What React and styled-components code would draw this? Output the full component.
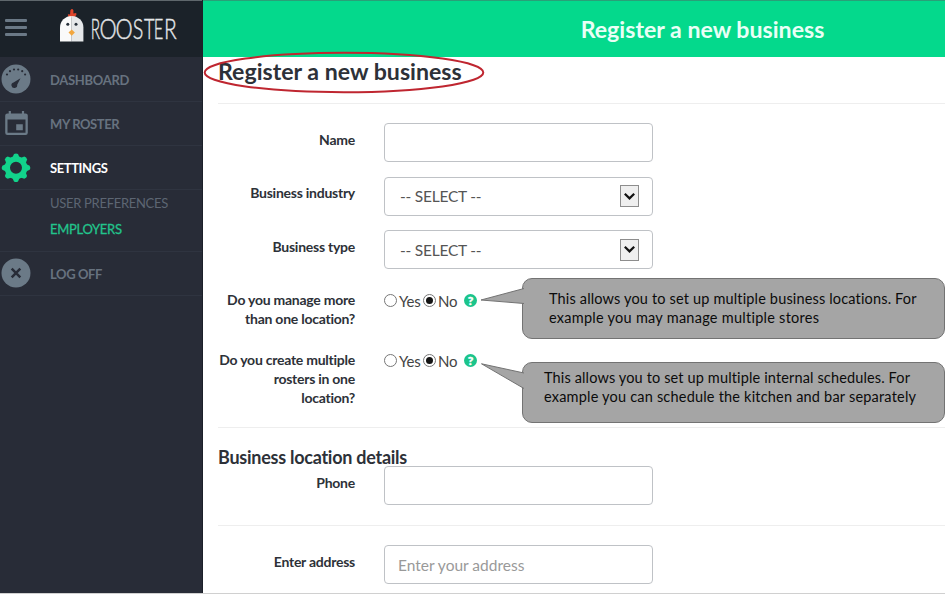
import React from "react";
import styled, { createGlobalStyle, css } from "styled-components";

const GlobalStyle = createGlobalStyle`
  * { box-sizing: border-box; }
  body { margin: 0; overflow: hidden; background: #fff; }
  h1, h2, h3, p { margin: 0; }
`;

const Page = styled.div`
  position: relative;
  display: flex;
  width: 945px;
  height: 594px;
  overflow: hidden;
  font-family: Lato, "Liberation Sans", sans-serif;
  color: #2d3138;
  border-bottom: 1px solid #d0d0d0;
`;

const Sidebar = styled.aside`
  display: flex;
  flex-direction: column;
  width: 203px;
  flex: none;
  background: #282c37;
  border-right: 1px solid #1c2029;
`;

const Brand = styled.div`
  display: flex;
  align-items: flex-start;
  height: 57px;
  flex: none;
  background: #1b2229;
  border-top: 1px solid #5f676c;
`;

const MenuButton = styled.button`
  display: flex;
  flex-direction: column;
  gap: 4px;
  width: 22px;
  margin: 18px 0 0 5px;
  padding: 0;
  border: 0;
  background: none;
`;

const MenuBar = styled.span`
  height: 3px;
  border-radius: 1px;
  background: #6b7986;
`;

const Logo = styled.svg`
  display: block;
  width: 130px;
  height: 48px;
  margin: 2px 0 0 28px;
  overflow: visible;
`;

const Nav = styled.nav`
  display: flex;
  flex-direction: column;
  padding-top: 1px;
`;

const NavItem = styled.div`
  display: flex;
  align-items: center;
  gap: 19px;
  height: 44px;
  flex: none;
  padding: 0 0 1px 1px;
  border-bottom: 1px solid #2f3440;
  font-size: 13px;
  font-weight: 700;
  letter-spacing: ${(p) => p.$spacing || "-0.4px"};
  color: ${(p) => (p.$active ? "#ffffff" : "#67727f")};
  svg { display: block; width: 30px; height: 30px; flex: none; }
`;

const NavText = styled.span`
  padding-top: 2px;
  line-height: 18px;
  white-space: nowrap;
`;

const SubNav = styled.div`
  height: 62px;
  flex: none;
  padding: 0 0 0 50px;
  border-bottom: 1px solid #2f3440;
`;

const SubItem = styled.div`
  height: 26px;
  line-height: 26px;
  font-size: 13px;
  white-space: nowrap;
  letter-spacing: -0.3px;
  color: ${(p) => (p.$active ? "#22c48c" : "#5d6673")};
  -webkit-text-stroke: ${(p) => (p.$active ? "0.3px #22c48c" : "0")};
`;

const Main = styled.main`
  flex: 1;
  min-width: 0;
  display: flex;
  flex-direction: column;
`;

const Header = styled.header`
  height: 57px;
  flex: none;
  padding-left: 257px;
  border-top: 1px solid #29a078;
  background: #04d98c;
  color: #e9fff6;
  font-size: 23.15px;
  font-weight: 700;
  line-height: 57px;
  text-align: center;
`;

const Content = styled.div`
  display: flex;
  flex-direction: column;
  padding-left: 15px;
`;

const Title = styled.h1`
  height: 47px;
  border-bottom: 1px solid #eeeeee;
  font-size: 23.15px;
  font-weight: 700;
  line-height: 29px;
`;

const Section = styled.section`
  height: ${(p) => p.$height}px;
  padding-top: ${(p) => p.$top}px;
  border-bottom: 1px solid ${(p) => (p.$last ? "transparent" : "#eeeeee")};
`;

const SectionTitle = styled.h2`
  height: 19px;
  font-size: 18px;
  font-weight: 700;
  line-height: 20px;
  letter-spacing: -0.26px;
`;

const Row = styled.div`
  display: grid;
  grid-template-columns: 137px 269px;
  column-gap: 29px;
  align-items: start;
  min-height: ${(p) => p.$height}px;
`;

const Label = styled.label`
  padding-top: ${(p) => p.$top ?? 7}px;
  font-size: 14px;
  font-weight: 700;
  line-height: 19px;
  letter-spacing: -0.25px;
  text-align: right;
  white-space: pre;
`;

const fieldFrame = css`
  width: 269px;
  height: 39px;
  border: 1.5px solid #bfc2c6;
  border-radius: 4px;
  background: #fff;
  font-family: inherit;
  font-size: 15.5px;
`;

const Input = styled.input`
  ${fieldFrame}
  padding: 0 13px;
  &::placeholder { color: #999; opacity: 1; }
`;

const Select = styled.div`
  ${fieldFrame}
  display: flex;
  align-items: center;
  justify-content: space-between;
  padding: 0 13px 0 15px;
  letter-spacing: -0.22px;
  color: #555;
`;

const SelectArrow = styled.span`
  display: flex;
  align-items: center;
  justify-content: center;
  width: 19px;
  height: 22px;
  border: 1px solid #8d8d8d;
  background: #efefef;
`;

const Radios = styled.div`
  display: flex;
  align-items: center;
  height: 21px;
  color: #444;
  font-size: 15px;
  letter-spacing: -0.2px;
`;

const Radio = styled.span`
  display: flex;
  align-items: center;
  justify-content: center;
  width: 13px;
  height: 13px;
  flex: none;
  border: 1px solid #777;
  border-radius: 50%;
  background: #fff;
  &::after {
    content: "";
    width: 7px;
    height: 7px;
    border-radius: 50%;
    background: ${(p) => (p.$checked ? "#151515" : "transparent")};
  }
`;

const RadioText = styled.span`
  width: ${(p) => p.$width}px;
  padding: 0 0 0 2px;
  line-height: 18px;
`;

const Help = styled.span`
  display: flex;
  align-items: center;
  justify-content: center;
  width: 13px;
  height: 13px;
  border-radius: 50%;
  background: #1bc48c;
  color: #fff;
  font-size: 12px;
  font-weight: 900;
  line-height: 13px;
  -webkit-text-stroke: 0.4px #fff;
`;

/* Annotations lie over the form */
const Ellipse = styled.svg`
  position: absolute;
  left: 202px;
  top: 50px;
`;

const Callout = styled.div`
  position: absolute;
  left: 522px;
  top: ${(p) => p.$top}px;
  width: 423px;
  height: 61px;
  padding: ${(p) => p.$padding};
  border: 1px solid #737373;
  border-radius: 10px;
  background: #a5a5a5;
  color: #0b0b0b;
  font-size: 14.5px;
  line-height: 19px;
  white-space: nowrap;
`;

const CalloutLine = styled.p`
  letter-spacing: ${(p) => p.$spacing};
`;

const Tail = styled.svg`
  position: absolute;
  left: -43px;
  top: 0;
  width: 44px;
  height: 40px;
`;

const Gauge = () => (
  <svg viewBox="0 0 30 30">
    <circle cx="15" cy="15" r="14.5" fill="#6b7a87" />
    <g fill="#282c37">
      <circle cx="6" cy="10.5" r="1.1" />
      <circle cx="9" cy="7.2" r="1.1" />
      <circle cx="13" cy="5.5" r="1.1" />
      <circle cx="17.2" cy="5.5" r="1.1" />
      <circle cx="21.2" cy="7.2" r="1.1" />
      <circle cx="24.1" cy="10.5" r="1.1" />
      <path d="M19.5 14.2 L16.2 20.8 A2.9 2.9 0 1 1 12.5 18.4 Z" />
    </g>
  </svg>
);

const CalendarIcon = () => (
  <svg viewBox="0 0 30 30">
    <path
      fill="#6b7a87"
      fillRule="evenodd"
      d="M7.7 3h2.2v2.4h11V3h2.2v2.4H24.6a2.2 2.2 0 0 1 2.2 2.2v17.2A2.2 2.2 0 0 1 24.6 27H6.4A2.2 2.2 0 0 1 4.2 24.8V7.6A2.2 2.2 0 0 1 6.4 5.4h1.3zM6.5 11.4v13.3h18V11.4z"
    />
    <path fill="#6b7a87" d="M15.2 16.3h6.6v6h-6.6z" />
  </svg>
);

const teeth = [0, 45, 90, 135, 180, 225, 270, 315];
const Gear = () => (
  <svg viewBox="0 -0.7 30 30">
    <circle cx="15" cy="15" r="8.7" fill="none" stroke="#12d38b" strokeWidth="5.4" />
    {teeth.map((a) => (
      <path
        key={a}
        d="M11.3 5 L13 1.3 Q15 .1 17 1.3 L18.7 5z"
        fill="#12d38b"
        transform={`rotate(${a} 15 15)`}
      />
    ))}
  </svg>
);

const CloseIcon = () => (
  <svg viewBox="0 0 30 30">
    <circle cx="15" cy="15" r="14.5" fill="#6b7a87" />
    <path d="M10.7 10.7l8.6 8.6M19.3 10.7l-8.6 8.6" stroke="#282c37" strokeWidth="2.5" />
  </svg>
);

const Chevron = () => (
  <svg width="13" height="9" viewBox="0 0 13 9">
    <path d="M1.8 1.8l4.7 4.6 4.7-4.6" fill="none" stroke="#111" strokeWidth="2.2" />
  </svg>
);

/* Wordmark letters: glyph, left edge, horizontal scale */
const wordmark = [
  ["R", 90.8, 0.56],
  ["O", 99.6, 0.79],
  ["O", 115.4, 0.79],
  ["S", 132.8, 0.72],
  ["T", 144, 0.66],
  ["E", 153.8, 0.6],
  ["R", 164, 0.76],
];

const RoosterLogo = () => (
  <Logo viewBox="55 3 130 48">
    <path d="M68.5 17.5l-.6-3.3 2.2.2.3-4.2q1.7-2.4 3 0v3.3l2.8-.5q.9 2-.9 3.2l-1 1.5z" fill="#e0452b" />
    <path d="M60 41.5V27.5a11.7 11.5 0 0 1 11.7-11.5v25.5z" fill="#fafafa" />
    <path d="M71.7 16a11.7 11.5 0 0 1 11.7 11.5v14H71.7z" fill="#e6e8ea" />
    <circle cx="67.8" cy="24.3" r="1.5" fill="#27303a" />
    <circle cx="76" cy="24.3" r="1.5" fill="#27303a" />
    <path d="M71.7 29.5l3.2 3-3.2 3.2-3.2-3.2z" fill="#f2a63f" />
    <g fontFamily="Lato, sans-serif" fontWeight="300" fontSize="27.5" fill="#e4e6e8" stroke="#e4e6e8" strokeWidth="0.4">
      {wordmark.map(([glyph, x, scale], i) => (
        <text key={i} transform={`translate(${x} 39.3) scale(${scale} 1)`}>{glyph}</text>
      ))}
    </g>
  </Logo>
);

const SelectField = () => (
  <Select>
    <span>-- SELECT --</span>
    <SelectArrow><Chevron /></SelectArrow>
  </Select>
);

const YesNo = () => (
  <Radios>
    <Radio />
    <RadioText $width={26}>Yes</RadioText>
    <Radio $checked />
    <RadioText $width={28}>No</RadioText>
    <Help>?</Help>
  </Radios>
);

export default function App() {
  return (
    <Page>
      <GlobalStyle />
      <Sidebar>
        <Brand>
          <MenuButton aria-label="Menu"><MenuBar /><MenuBar /><MenuBar /></MenuButton>
          <RoosterLogo />
        </Brand>
        <Nav>
          <NavItem $spacing="-0.3px"><Gauge /><NavText>DASHBOARD</NavText></NavItem>
          <NavItem><CalendarIcon /><NavText>MY ROSTER</NavText></NavItem>
          <NavItem $active><Gear /><NavText>SETTINGS</NavText></NavItem>
          <SubNav>
            <SubItem>USER PREFERENCES</SubItem>
            <SubItem $active>EMPLOYERS</SubItem>
          </SubNav>
          <NavItem><CloseIcon /><NavText>LOG OFF</NavText></NavItem>
        </Nav>
      </Sidebar>
      <Main>
        <Header>Register a new business</Header>
        <Content>
          <Title>Register a new business</Title>
          <Section $height={324} $top={19}>
            <Row $height={53.5}><Label>Name</Label><Input /></Row>
            <Row $height={53.5}><Label $top={6.4}>Business industry</Label><SelectField /></Row>
            <Row $height={60}><Label>Business type</Label><SelectField /></Row>
            <Row $height={60}>
              <Label $top={0}>{"Do you manage more\nthan one location?"}</Label>
              <YesNo />
            </Row>
            <Row $height={60}>
              <Label $top={0}>{"Do you create multiple\nrosters in one\nlocation?"}</Label>
              <YesNo />
            </Row>
          </Section>
          <Section $height={98} $top={19}>
            <SectionTitle>Business location details</SectionTitle>
            <Row $height={39}><Label>Phone</Label><Input /></Row>
          </Section>
          <Section $height={68} $top={19} $last>
            <Row $height={39}><Label>Enter address</Label><Input placeholder="Enter your address" /></Row>
          </Section>
        </Content>
      </Main>
      <Ellipse width="284" height="46" viewBox="0 0 284 46">
        <ellipse cx="142" cy="22.5" rx="139.3" ry="19.7" fill="none" stroke="#bf2630" strokeWidth="2" />
      </Ellipse>
      <Callout $top={278} $padding="10px 0 0 26px">
        <Tail viewBox="0 0 44 40">
          <path d="M44 9.5L1 21 44 24.5" fill="#a5a5a5" stroke="#737373" />
        </Tail>
        <CalloutLine $spacing="0.16px">This allows you to set up multiple business locations. For</CalloutLine>
        <CalloutLine $spacing="0.26px">example you may manage multiple stores</CalloutLine>
      </Callout>
      <Callout $top={362} $padding="5px 0 0 21px">
        <Tail viewBox="0 0 44 40">
          <path d="M44 10L1.5 .8 44 25.5" fill="#a5a5a5" stroke="#737373" />
        </Tail>
        <CalloutLine $spacing="0.14px">This allows you to set up multiple internal schedules. For</CalloutLine>
        <CalloutLine $spacing="0.2px">example you can schedule the kitchen and bar separately</CalloutLine>
      </Callout>
    </Page>
  );
}
